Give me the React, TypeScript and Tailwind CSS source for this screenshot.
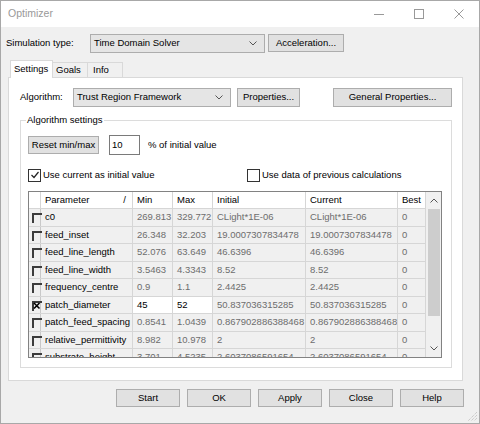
import React from "react";

const rows = [
  { name: "c0", min: "269.813", max: "329.772", initial: "CLight*1E-06", current: "CLight*1E-06", best: "0" },
  { name: "feed_inset", min: "26.348", max: "32.203", initial: "19.0007307834478", current: "19.0007307834478", best: "0" },
  { name: "feed_line_length", min: "52.076", max: "63.649", initial: "46.6396", current: "46.6396", best: "0" },
  { name: "feed_line_width", min: "3.5463", max: "4.3343", initial: "8.52", current: "8.52", best: "0" },
  { name: "frequency_centre", min: "0.9", max: "1.1", initial: "2.4425", current: "2.4425", best: "0" },
  { name: "patch_diameter", min: "45", max: "52", initial: "50.837036315285", current: "50.837036315285", best: "0", checked: true },
  { name: "patch_feed_spacing", min: "0.8541", max: "1.0439", initial: "0.867902886388468", current: "0.867902886388468", best: "0" },
  { name: "relative_permittivity", min: "8.982", max: "10.978", initial: "2", current: "2", best: "0" },
  { name: "substrate_height", min: "3.701", max: "4.5235", initial: "2.6037086591654", current: "2.6037086591654", best: "0" },
];

function Btn({ className = "", children }: { className?: string; children: React.ReactNode }) {
  return (
    <div className={`flex items-center justify-center h-[18px] bg-[#e1e1e1] border border-[#adadad] text-black ${className}`}>
      {children}
    </div>
  );
}

function Chevron({ up = false }: { up?: boolean }) {
  return (
    <svg width="8" height="5" viewBox="0 0 8 5">
      <path d={up ? "M0.5 4.5 L4 1 L7.5 4.5" : "M0.5 0.5 L4 4 L7.5 0.5"} fill="none" stroke="#555" strokeWidth="1" />
    </svg>
  );
}

function Combo({ className = "", children }: { className?: string; children: React.ReactNode }) {
  return (
    <div className={`flex items-center h-[19px] bg-[#e5e5e5] border border-[#adadad] pl-[3px] pr-[7px] ${className}`}>
      <span className="flex-1 whitespace-nowrap">{children}</span>
      <Chevron />
    </div>
  );
}

function Check({ label, className = "", checked = false }: { label: string; className?: string; checked?: boolean }) {
  return (
    <div className={`flex items-center gap-[2px] ${className}`}>
      <div className="w-[13px] h-[13px] border border-[#333] bg-white flex items-center justify-center">
        {checked && (
          <svg width="10" height="10" viewBox="0 0 10 10">
            <path d="M1.5 5 L4 7.5 L8.5 2" fill="none" stroke="#222" strokeWidth="1.2" />
          </svg>
        )}
      </div>
      <span>{label}</span>
    </div>
  );
}

const cell = "h-full flex items-center pl-[4px] border-r border-[#d6d6d6] whitespace-nowrap overflow-hidden";

function Row({ r }: { r: (typeof rows)[number] }) {
  const edit = r.checked;
  return (
    <div className="flex h-[17.5px] shrink-0 border-b border-[#d6d6d6] bg-[#f0f0f0]">
      <div className="relative w-[12px] h-full border-r border-[#c8c8c8]">
        <div className="absolute left-[3px] top-[4px] w-[10px] h-[10px] border-t-2 border-l-2 border-[#3c3c3c]" />
        {edit && (
          <svg className="absolute left-[3px] top-[4px]" width="9" height="9" viewBox="0 0 9 9">
            <path d="M2 2 L7.5 7.5 M7.5 2 L2 7.5" stroke="#000" strokeWidth="1.6" />
          </svg>
        )}
      </div>
      <div className={`${cell} w-[92px] text-black`}>{r.name}</div>
      <div className={`${cell} w-[40px] ${edit ? "bg-white text-black" : "text-[#6d6d6d]"}`}>{r.min}</div>
      <div className={`${cell} w-[40px] ${edit ? "bg-white text-black" : "text-[#6d6d6d]"}`}>{r.max}</div>
      <div className={`${cell} w-[93px] text-[#6d6d6d]`}>{r.initial}</div>
      <div className={`${cell} w-[92px] text-[#6d6d6d]`}>{r.current}</div>
      <div className={`${cell} w-[28px] text-[#6d6d6d]`}>{r.best}</div>
    </div>
  );
}

function Table() {
  const head = "h-full flex items-center pl-[4px] border-r border-[#d6d6d6] bg-white text-black";
  return (
    <div className="ml-[7px] mt-[9px] w-[414px] h-[167px] border border-[#828282] flex overflow-hidden">
      <div className="w-[397px] flex flex-col overflow-hidden">
        <div className="flex h-[17px] shrink-0 border-b border-[#d6d6d6]">
          <div className="w-[12px] h-full border-r border-[#d6d6d6] bg-white" />
          <div className={`${head} w-[92px] pr-[6px] justify-between`}>
            <span>Parameter</span>
            <span>/</span>
          </div>
          <div className={`${head} w-[40px]`}>Min</div>
          <div className={`${head} w-[40px]`}>Max</div>
          <div className={`${head} w-[93px]`}>Initial</div>
          <div className={`${head} w-[92px]`}>Current</div>
          <div className={`${head} w-[28px]`}>Best</div>
        </div>
        {rows.map((r) => (
          <Row key={r.name} r={r} />
        ))}
      </div>
      {/* Scrollbar */}
      <div className="w-[15px] flex flex-col bg-[#f0f0f0]">
        <div className="h-[17px] flex items-center justify-center">
          <Chevron up />
        </div>
        <div className="flex-1">
          <div className="mx-auto w-[12px] h-[107px] bg-[#cdcdcd]" />
        </div>
        <div className="h-[17px] flex items-center justify-center">
          <Chevron />
        </div>
      </div>
    </div>
  );
}

export default function App() {
  return (
    <div className="relative w-[480px] h-[424px] border border-[#a8a8a8] flex flex-col font-['Liberation_Sans',Arial,sans-serif] text-[9.5px] text-black bg-[#f0f0f0] overflow-hidden">
      {/* Title bar */}
      <div className="h-[26px] bg-white flex items-center shrink-0">
        <span className="pl-[7px] text-[10.5px] text-[#999]">Optimizer</span>
        <div className="ml-auto flex h-full">
          <div className="w-[40px] flex items-center justify-center">
            <svg width="10" height="10" viewBox="0 0 10 10">
              <path d="M0 5.5 H10" stroke="#999" strokeWidth="1" />
            </svg>
          </div>
          <div className="w-[40px] flex items-center justify-center">
            <svg width="10" height="10" viewBox="0 0 10 10">
              <rect x="0.5" y="0.5" width="9" height="9" fill="none" stroke="#999" strokeWidth="1" />
            </svg>
          </div>
          <div className="w-[40px] flex items-center justify-center">
            <svg width="10" height="10" viewBox="0 0 10 10">
              <path d="M0.5 0.5 L9.5 9.5 M9.5 0.5 L0.5 9.5" stroke="#999" strokeWidth="1" />
            </svg>
          </div>
        </div>
      </div>

      {/* Simulation type row */}
      <div className="flex items-center h-[18px] mt-[7px] pl-[5px]">
        <span className="w-[84px]">Simulation type:</span>
        <Combo className="w-[175px]">Time Domain Solver</Combo>
        <Btn className="w-[76px] ml-[3px]">Acceleration...</Btn>
      </div>

      {/* Tabs */}
      <div className="flex items-end h-[17px] mt-[8px] ml-[9px]">
        <div className="relative z-10 w-[43px] h-[18px] -mb-px bg-white border-t border-l border-r border-[#d9d9d9] flex items-center pl-[3px]">
          Settings
        </div>
        <div className="w-[35px] h-[15px] border-t border-r border-[#d9d9d9] flex items-center pl-[3px]">Goals</div>
        <div className="w-[35px] h-[15px] border-t border-r border-[#d9d9d9] flex items-center pl-[5px]">Info</div>
      </div>

      {/* Tab panel */}
      <div className="ml-[7px] w-[455px] h-[304px] bg-white border border-[#d9d9d9] flex flex-col">
        <div className="flex items-center h-[19px] mt-[10px] pl-[11px]">
          <span className="w-[53px]">Algorithm:</span>
          <Combo className="w-[158px]">Trust Region Framework</Combo>
          <Btn className="w-[63px] h-[19px] ml-[6px]">Properties...</Btn>
          <Btn className="w-[119px] h-[19px] ml-[33px]">General Properties...</Btn>
        </div>

        {/* Group box */}
        <div className="relative ml-[11px] mt-[13px] w-[432px] h-[248px] border border-[#dcdcdc] flex flex-col">
          <span className="absolute left-[5px] -top-[7px] bg-white px-[1px] leading-[12px]">Algorithm settings</span>
          <div className="flex items-center h-[20px] mt-[14px] pl-[7px]">
            <Btn className="w-[71px]">Reset min/max</Btn>
            <div className="ml-[10px] w-[31px] h-[20px] border border-[#7a7a7a] bg-white flex items-center pl-[2px]">10</div>
            <span className="ml-[8px]">% of initial value</span>
          </div>
          <div className="flex items-center mt-[13px] pl-[7px]">
            <Check className="w-[219px]" label="Use current as initial value" checked />
            <Check label="Use data of previous calculations" />
          </div>
          <Table />
        </div>
      </div>

      {/* Bottom buttons */}
      <div className="flex justify-end gap-[7px] mt-[8px] pr-[15px]">
        <Btn className="w-[64px]">Start</Btn>
        <Btn className="w-[64px]">OK</Btn>
        <Btn className="w-[64px]">Apply</Btn>
        <Btn className="w-[64px]">Close</Btn>
        <Btn className="w-[64px]">Help</Btn>
      </div>

      {/* Resize grip */}
      <svg className="absolute right-[1px] bottom-[1px]" width="10" height="10" viewBox="0 0 10 10">
        <path d="M9 3 L3 9 M9 6 L6 9 M9 0 L0 9" stroke="#bbb" strokeWidth="1" strokeDasharray="1 1" />
      </svg>
    </div>
  );
}
